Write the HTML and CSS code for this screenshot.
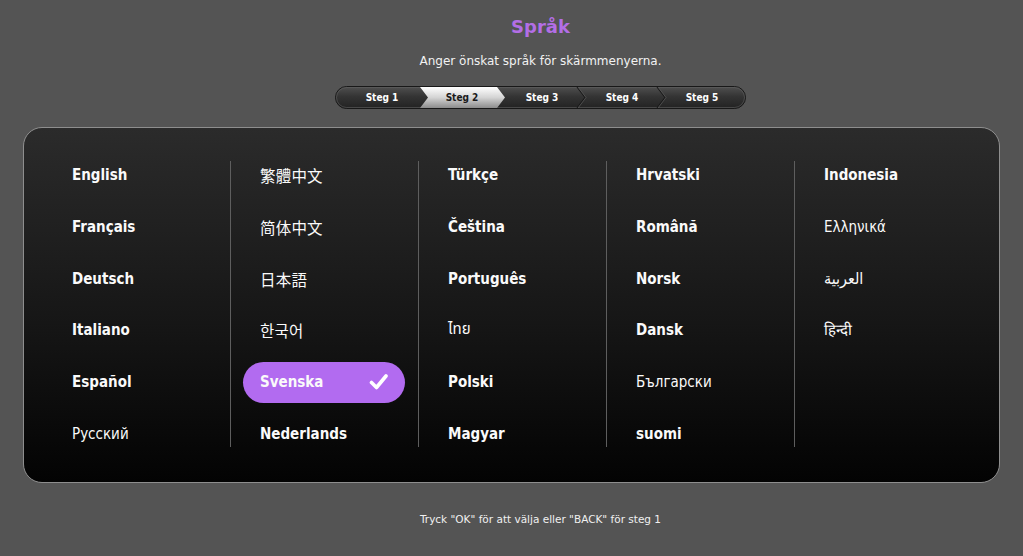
FILE: index.html
```html
<!DOCTYPE html>
<html lang="sv">
<head>
<meta charset="utf-8">
<title>Språk</title>
<link rel="stylesheet" href="styles.css">
</head>
<body>
<div class="page">
  <header class="top">
    <h1 class="title">Språk</h1>
    <p class="subtitle">Anger önskat språk för skärmmenyerna.</p>
    <div class="steps">
      <span class="step">Steg 1</span>
      <span class="step active">Steg 2</span>
      <span class="step">Steg 3</span>
      <span class="step">Steg 4</span>
      <span class="step">Steg 5</span>
    </div>
  </header>

  <main class="panel">
    <div class="grid">
      <ul class="col">
        <li class="lang">English</li>
        <li class="lang">Français</li>
        <li class="lang">Deutsch</li>
        <li class="lang">Italiano</li>
        <li class="lang">Español</li>
        <li class="lang plain">Русский</li>
      </ul>
      <ul class="col">
        <li class="lang cjk tc">繁體中文</li>
        <li class="lang cjk sc">简体中文</li>
        <li class="lang cjk jp">日本語</li>
        <li class="lang cjk kr">한국어</li>
        <li class="lang selected"><span>Svenska</span>
          <svg class="check" width="20" height="18" viewBox="0 0 20 18"><polyline points="2.5,9.5 7.5,14.5 17,3" fill="none" stroke="#fff" stroke-width="3.6" stroke-linecap="round" stroke-linejoin="round"/></svg>
        </li>
        <li class="lang">Nederlands</li>
      </ul>
      <ul class="col">
        <li class="lang">Türkçe</li>
        <li class="lang">Čeština</li>
        <li class="lang">Português</li>
        <li class="lang plain thai">ไทย</li>
        <li class="lang">Polski</li>
        <li class="lang">Magyar</li>
      </ul>
      <ul class="col">
        <li class="lang">Hrvatski</li>
        <li class="lang">Română</li>
        <li class="lang">Norsk</li>
        <li class="lang">Dansk</li>
        <li class="lang plain">Български</li>
        <li class="lang">suomi</li>
      </ul>
      <ul class="col">
        <li class="lang">Indonesia</li>
        <li class="lang plain">Ελληνικά</li>
        <li class="lang plain arabic">العربية</li>
        <li class="lang plain hindi">हिन्दी</li>
      </ul>
    </div>
  </main>

  <footer class="footer">Tryck "OK" för att välja eller "BACK" för steg 1</footer>
</div>
</body>
</html>
```

FILE: styles.css
```css
* { box-sizing: border-box; }

html, body {
  margin: 0;
  padding: 0;
  background: #545454;
}

body {
  width: 1023px;
  height: 556px;
  overflow: hidden;
  font-family: "DejaVu Sans", "Noto Sans", sans-serif;
  color: #fff;
}

.page {
  display: flex;
  flex-direction: column;
}

.top {
  display: flex;
  flex-direction: column;
  align-items: center;
  padding-left: 58px;
  padding-top: 15px;
}

.title {
  margin: 0;
  font-size: 18px;
  line-height: 24px;
  font-weight: bold;
  color: #b36ee6;
}

.subtitle {
  margin: 14px 0 0;
  font-size: 12px;
  line-height: 16px;
  color: #f2f2f2;
}

.steps {
  margin-top: 17px;
  width: 411px;
  height: 23px;
  padding-left: 7px;
  display: flex;
  align-items: center;
  background: url("data:image/svg+xml,%3Csvg xmlns='http://www.w3.org/2000/svg' width='411' height='23' viewBox='0 0 411 23'%3E%3Cdefs%3E%3ClinearGradient id='d' x1='0' y1='0' x2='0' y2='1'%3E%3Cstop offset='0' stop-color='%23505050'/%3E%3Cstop offset='0.45' stop-color='%23343434'/%3E%3Cstop offset='1' stop-color='%23222222'/%3E%3C/linearGradient%3E%3ClinearGradient id='l' x1='0' y1='0' x2='0' y2='1'%3E%3Cstop offset='0' stop-color='%23ffffff'/%3E%3Cstop offset='0.5' stop-color='%23d4d4d4'/%3E%3Cstop offset='1' stop-color='%238c8c8c'/%3E%3C/linearGradient%3E%3C/defs%3E%3Crect x='0.5' y='0.5' width='410' height='22' rx='11' fill='url(%23d)' stroke='%23181818'/%3E%3Crect x='1.5' y='1.5' width='408' height='20' rx='10' fill='none' stroke='%23606060' stroke-opacity='0.6'/%3E%3Cpath d='M85 1H162L170 11.5L162 22H85L93 11.5Z' fill='url(%23l)'/%3E%3Cpath d='M242 1L250 11.5L242 22M322 1L330 11.5L322 22' fill='none' stroke='%23181818' stroke-width='1.2'/%3E%3Cpath d='M243 1L251 11.5L243 22M323 1L331 11.5L323 22' fill='none' stroke='%23585858' stroke-width='0.8'/%3E%3C/svg%3E") no-repeat;
}

.step {
  width: 80px;
  text-align: center;
  font-family: "DejaVu Sans Condensed", "DejaVu Sans", sans-serif;
  font-stretch: condensed;
  font-weight: bold;
  font-size: 10px;
  line-height: 23px;
  color: #fff;
}

.step.active {
  color: #1a1a1a;
}

.panel {
  margin: 18px 23px 0;
  height: 356px;
  border: 1px solid #8e8e8e;
  border-radius: 19px;
  background: linear-gradient(to bottom, #2b2b2b 0%, #161616 55%, #030303 100%);
  padding: 34px 17px 0 18px;
}

.grid {
  display: grid;
  grid-template-columns: repeat(5, 188px);
}

.col {
  list-style: none;
  margin: 0;
  padding: 0 0 0 30px;
  height: 286px;
  margin-top: -1px;
  display: flex;
  flex-direction: column;
  gap: 23.8px;
}

.col + .col {
  border-left: 1px solid #5e5e5e;
  padding-left: 29px;
}

.lang {
  height: 28px;
  line-height: 28px;
  font-family: "DejaVu Sans Condensed", "DejaVu Sans", sans-serif;
  font-stretch: condensed;
  font-weight: bold;
  font-size: 15px;
  color: #fafafa;
  white-space: nowrap;
}

.lang.plain {
  font-weight: normal;
}

.lang.cjk {
  font-weight: normal;
  font-size: 15.5px;
  letter-spacing: 0.2px;
}
.lang.tc { font-family: "Noto Sans CJK TC", sans-serif; }
.lang.sc { font-family: "Noto Sans CJK SC", sans-serif; }
.lang.jp { font-family: "Noto Sans CJK JP", sans-serif; }
.lang.kr { font-family: "Noto Sans CJK KR", sans-serif; }

.lang.thai {
  font-family: "Noto Sans Thai", "Loma", "Garuda", "Norasi", "DejaVu Sans", sans-serif;
  font-size: 15px;
  color: #fafafa;
}
.lang.arabic {
  font-family: "DejaVu Sans", "Noto Sans", sans-serif;
  font-size: 16px;
}
.lang.hindi { font-size: 15px; }

.lang.selected {
  height: 41px;
  margin: -6.5px 13px -6.5px -17px;
  padding: 0 16px 0 17px;
  border-radius: 21px;
  background: #b26bf0;
  display: flex;
  align-items: center;
  justify-content: space-between;
  line-height: 41px;
}

.check {
  display: block;
}

.footer {
  margin-top: 29px;
  padding-left: 58px;
  text-align: center;
  font-family: "DejaVu Sans", sans-serif;
  font-size: 10.5px;
  line-height: 14px;
  color: #f0f0f0;
}
```
